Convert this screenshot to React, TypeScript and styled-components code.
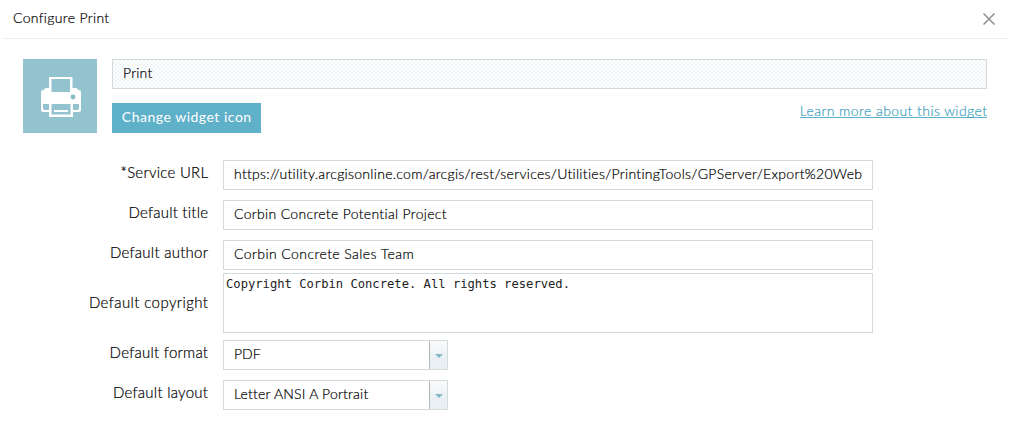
import React from "react";
import styled, { createGlobalStyle } from "styled-components";

const GlobalStyle = createGlobalStyle`
  * { box-sizing: border-box; }
  body {
    margin: 0;
    background: #fff;
    color: #000;
    font-family: Lato, "Open Sans", sans-serif;
    font-size: 14px;
    font-weight: 300;
    overflow: hidden;
  }
`;

const Dialog = styled.main`
  width: 1015px;
  height: 445px;
  background: #fff;
`;

const Header = styled.header`
  display: flex;
  justify-content: space-between;
  align-items: center;
  height: 39px;
  margin: 0 7px 0 3px;
  padding: 0 13px 3px 10px;
  border-bottom: 1px solid #ececec;
`;

const Text = styled.span<{ $spacing?: number; $plain?: boolean }>`
  letter-spacing: ${(p) => p.$spacing ?? 0}px;
  margin-right: ${(p) => -(p.$spacing ?? 0)}px;
  white-space: nowrap;
  -webkit-text-stroke: ${(p) => (p.$plain ? 0 : 0.2)}px currentColor;
`;

const CloseButton = styled.button`
  display: flex;
  padding: 0;
  border: 0;
  background: none;
  color: #8d8d8d;
  margin-top: 3px;
`;

const Summary = styled.section`
  display: flex;
  gap: 15px;
  padding: 20px 28px 0 23px;
`;

const WidgetIcon = styled.div`
  width: 74px;
  height: 74px;
  background: #93c3cf;
  svg { display: block; }
`;

const SummaryBody = styled.div`
  flex: 1;
  display: flex;
  flex-direction: column;
  gap: 14px;
`;

const NameField = styled.div`
  height: 30px;
  padding: 0 10px;
  border: 1px solid #d5dadd;
  line-height: 26px;
  background: repeating-conic-gradient(#f3f6f8 0 25%, #fdfefe 0 50%) 0 0 / 4px 4px;
`;

const Actions = styled.div`
  display: flex;
  justify-content: space-between;
`;

const ChangeButton = styled.button`
  width: 149px;
  height: 30px;
  padding: 0 0 2px;
  border: 0;
  background: #5fb0c9;
  color: #fff;
  font: 400 14px/28px Lato, sans-serif;
`;

const LearnLink = styled.a`
  height: 15px;
  line-height: 15px;
  color: #3d9fbd;
  border-bottom: 1px solid #5fb0c9;
`;

const Form = styled.section`
  padding: 27px 0 0 23px;
`;

const Row = styled.div<{ $gap?: number }>`
  display: flex;
  margin-bottom: ${(p) => p.$gap ?? 10}px;
`;

const Label = styled.label<{ $top?: number }>`
  width: 185px;
  margin-right: 15px;
  padding-top: ${(p) => p.$top ?? 0}px;
  text-align: right;
  font-size: 15px;
  line-height: 25px;
`;

const Field = styled.div`
  width: 650px;
  height: 30px;
  padding: 0 10px;
  border: 1px solid #d5dadd;
  line-height: 26px;
`;

const Clip = styled.div`
  overflow: hidden;
  white-space: nowrap;
`;

const CopyrightArea = styled.div`
  width: 650px;
  height: 60px;
  padding: 2px;
  border: 1px solid #d5dadd;
  font: 400 12.17px/17px "DejaVu Sans Mono", monospace;
  color: #222;
`;

const Select = styled.div`
  display: flex;
  justify-content: space-between;
  width: 225px;
  height: 30px;
  padding-left: 10px;
  border: 1px solid #d5dadd;
  line-height: 26px;
`;

const SelectArrow = styled.span`
  display: flex;
  align-items: center;
  justify-content: center;
  width: 18px;
  margin-left: auto;
  padding-top: 2px;
  border-left: 1px solid #b5b9bb;
  background: linear-gradient(#fafcfc, #e9eff2 65%);
`;

const CloseIcon = () => (
  <svg width="12" height="12" viewBox="0 0 12 12" fill="none" stroke="currentColor" strokeWidth="1.5">
    <path d="M.5 .5 11.5 11.5M11.5 .5 .5 11.5" />
  </svg>
);

const PrinterIcon = () => (
  <svg width="74" height="74" viewBox="0 0 74 74" fill="none">
    <path fill="#fff" d="M18 33q0-2 2-2h1q0-2 3-2h28q3 0 3 2h1q2 0 2 2v18q0 2-2 2h-6v5H26v-5h-6q-2 0-2-2z" />
    <path fill="#fff" d="M26 18h23.5v14H26z" />
    <path fill="#93c3cf" d="M28.5 20h18.5v13H28.5zM20 45h6v6h-4q-2 0-2-2zM50 45h6v4q0 2-2 2h-4zM28.5 45h19v10.5h-19z" />
    <path fill="#fff" d="M31 51h14v2H31z" />
    <circle cx="50" cy="38" r="2.4" fill="#86bcca" />
  </svg>
);

const Caret = () => (
  <svg width="8" height="4" viewBox="0 0 8 4">
    <path fill="#86b9c6" d="M0 0h8L4 4z" />
  </svg>
);

const URL =
  "https://utility.arcgisonline.com/arcgis/rest/services/Utilities/PrintingTools/GPServer/Export%20Web";

export default function App() {
  return (
    <>
      <GlobalStyle />
      <Dialog>
        <Header>
          <Text $spacing={0.33}>Configure Print</Text>
          <CloseButton aria-label="Close"><CloseIcon /></CloseButton>
        </Header>
        <Summary>
          <WidgetIcon><PrinterIcon /></WidgetIcon>
          <SummaryBody>
            <NameField><Text $spacing={0.2}>Print</Text></NameField>
            <Actions>
              <ChangeButton><Text $plain $spacing={0.5}>Change widget icon</Text></ChangeButton>
              <LearnLink><Text $spacing={0.42}>Learn more about this widget</Text></LearnLink>
            </Actions>
          </SummaryBody>
        </Summary>
        <Form>
          <Row>
            <Label><Text $spacing={0.25}>*Service URL</Text></Label>
            <Field><Clip><Text $spacing={0.3}>{URL}</Text></Clip></Field>
          </Row>
          <Row>
            <Label><Text $spacing={0.22}>Default title</Text></Label>
            <Field><Text $spacing={0.32}>Corbin Concrete Potential Project</Text></Field>
          </Row>
          <Row $gap={3}>
            <Label><Text $spacing={0.26}>Default author</Text></Label>
            <Field><Text $spacing={0.42}>Corbin Concrete Sales Team</Text></Field>
          </Row>
          <Row $gap={7}>
            <Label $top={17}><Text $spacing={0.4}>Default copyright</Text></Label>
            <CopyrightArea>Copyright Corbin Concrete. All rights reserved.</CopyrightArea>
          </Row>
          <Row>
            <Label><Text $spacing={0.26}>Default format</Text></Label>
            <Select><Text $spacing={0}>PDF</Text><SelectArrow><Caret /></SelectArrow></Select>
          </Row>
          <Row>
            <Label><Text $spacing={0.26}>Default layout</Text></Label>
            <Select><Text $spacing={0.2}>Letter ANSI A Portrait</Text><SelectArrow><Caret /></SelectArrow></Select>
          </Row>
        </Form>
      </Dialog>
    </>
  );
}
